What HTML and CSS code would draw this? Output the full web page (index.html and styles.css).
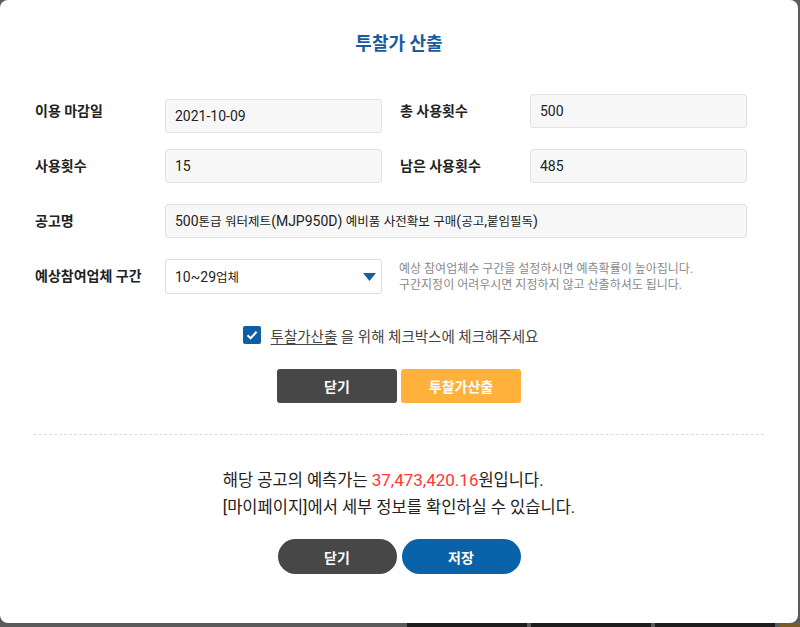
FILE: index.html
```html
<!DOCTYPE html>
<html lang="ko">
<head>
<meta charset="UTF-8">
<meta name="viewport" content="width=device-width, initial-scale=1.0">
<title>투찰가 산출</title>
<link rel="stylesheet" href="styles.css">
</head>
<body>

<!-- 뒤쪽 페이지 -->
<div class="page">
  <div class="page-body"></div>
  <div class="page-footer">
    <div class="tile"></div>
    <div class="tile"></div>
    <div class="tile"></div>
    <div class="tile tile-brown"></div>
  </div>
</div>

<!-- 투찰가 산출 팝업 -->
<div class="modal">
  <h2 class="modal-title">투찰가 산출</h2>

  <div class="form">
    <div class="form-row form-row-top">
      <div class="field">
        <label class="field-label">이용 마감일</label>
        <div class="field-input field-input-low">2021-10-09</div>
      </div>
      <div class="field">
        <label class="field-label">총 사용횟수</label>
        <div class="field-input">500</div>
      </div>
    </div>

    <div class="form-row">
      <div class="field">
        <label class="field-label">사용횟수</label>
        <div class="field-input">15</div>
      </div>
      <div class="field">
        <label class="field-label">남은 사용횟수</label>
        <div class="field-input">485</div>
      </div>
    </div>

    <div class="form-row">
      <div class="field">
        <label class="field-label">공고명</label>
        <div class="field-input field-input-wide">500<span class="ko">톤급</span> <span class="ko">워터제트</span>(MJP950D) <span class="ko">예비품</span> <span class="ko">사전확보</span> <span class="ko">구매</span>(<span class="ko">공고</span>,<span class="ko">붙임필독</span>)</div>
      </div>
    </div>

    <div class="form-row form-row-select">
      <div class="field">
        <label class="field-label">예상참여업체 구간</label>
        <div class="select-box">
          <span>10~29<span class="ko">업체</span></span>
          <svg width="13" height="8" viewBox="0 0 13 8"><polygon points="0,0 13,0 6.5,8" fill="#1b5e9c"/></svg>
        </div>
      </div>
      <p class="help-text">예상 참여업체수 구간을 설정하시면 예측확률이 높아집니다.<br>구간지정이 어려우시면 지정하지 않고 산출하셔도 됩니다.</p>
    </div>
  </div>

  <div class="agree">
    <span class="check-box">
      <svg width="18" height="18" viewBox="0 0 18 18"><polyline points="4.5,9.2 7.6,12.2 13.6,5.8" fill="none" stroke="#fff" stroke-width="2"/></svg>
    </span>
    <span class="agree-text"><u>투찰가산출</u> 을 위해 체크박스에 체크해주세요</span>
  </div>

  <div class="buttons">
    <button class="btn btn-dark">닫기</button>
    <button class="btn btn-orange">투찰가산출</button>
  </div>

  <div class="divider"></div>

  <div class="result">
    <div class="result-text">
      <p>해당 공고의 예측가는 <span class="price">37,473,420.16</span>원입니다.</p>
      <p>[마이페이지]에서 세부 정보를 확인하실 수 있습니다.</p>
    </div>
  </div>

  <div class="buttons buttons-round">
    <button class="btn btn-pill btn-dark">닫기</button>
    <button class="btn btn-pill btn-blue">저장</button>
  </div>
</div>

</body>
</html>
```

FILE: styles.css
```css
body {
  margin: 0;
  font-family: 'Roboto', 'Noto Sans CJK KR', sans-serif;
  background-color: #5a5a5a;
  color: #222;
}
.page {
  height: 627px;
  display: flex;
  flex-direction: column;
}
.page-body {
  height: 623px;
}
.page-footer {
  display: flex;
  gap: 4px;
  height: 4px;
  padding-left: 407px;
}
.tile {
  width: 120px;
  background-color: #1d1d1d;
}
.tile-brown {
  width: 20px;
  margin-left: 1px;
  background-color: #7a5a27;
}
.modal {
  position: absolute;
  top: 0;
  left: 0;
  width: 798px;
  height: 623px;
  box-sizing: border-box;
  padding: 32px 34px 0;
  background-color: #fff;
  border-radius: 8px;
}
.modal-title {
  margin: 0;
  text-align: center;
  font-size: 18px;
  line-height: 24px;
  font-weight: 700;
  color: #1a5b9f;
}
.form {
  margin-top: 38px;
}
.form-row {
  display: flex;
  align-items: flex-start;
  gap: 17px;
  margin-bottom: 21px;
}
.form-row-top {
  margin-bottom: 16px;
}
.form-row-select {
  align-items: center;
  margin-bottom: 0;
}
.field {
  display: flex;
  align-items: flex-start;
}
.field-label {
  width: 131px;
  padding-left: 1px;
  box-sizing: border-box;
  font-size: 14px;
  line-height: 34px;
  font-weight: 700;
  color: #222;
}
.field-input {
  width: 217px;
  height: 34px;
  box-sizing: border-box;
  white-space: nowrap;
  padding: 0 9px;
  border: 1px solid #e3e3e3;
  border-radius: 3px;
  background-color: #f7f7f7;
  font-size: 14px;
  line-height: 32px;
  color: #222;
}
.ko {
  font-size: 12.5px;
}
.field-input-low {
  margin-top: 5px;
}
.field-input-wide {
  width: 582px;
}
.form-row-select .field-label {
  line-height: 35px;
}
.select-box {
  width: 217px;
  height: 35px;
  box-sizing: border-box;
  display: flex;
  align-items: center;
  justify-content: space-between;
  padding: 0 5px 0 9px;
  border: 1px solid #dedede;
  border-radius: 3px;
  background-color: #fff;
  font-size: 14px;
}
.help-text {
  margin: 0;
  font-size: 12px;
  line-height: 16px;
  color: #8a8a8a;
}
.agree {
  display: flex;
  align-items: center;
  justify-content: center;
  gap: 10px;
  margin-top: 32px;
  padding-right: 17px;
  height: 18px;
}
.check-box {
  display: flex;
  width: 18px;
  height: 18px;
  border-radius: 2px;
  background-color: #0e5ea6;
}
.agree-text {
  font-size: 14.5px;
  color: #444;
}
.agree-text u {
  text-underline-offset: 2px;
}
.buttons {
  display: flex;
  justify-content: center;
  gap: 4px;
  margin-top: 25px;
}
.btn {
  width: 120px;
  height: 34px;
  border: none;
  border-radius: 3px;
  padding: 0;
  font-family: inherit;
  font-size: 14px;
  font-weight: 700;
  color: #fff;
  cursor: pointer;
}
.btn-dark {
  background-color: #474747;
}
.btn-orange {
  background-color: #ffb13c;
}
.btn-blue {
  background-color: #0a63a8;
}
.divider {
  margin-top: 31px;
  border-top: 1px dashed #dcdcdc;
}
.result {
  display: flex;
  justify-content: center;
  margin-top: 32px;
  font-size: 16.5px;
  line-height: 27px;
  color: #222;
}
.result p {
  margin: 0;
}
.price {
  font-size: 17px;
  color: #ff3535;
}
.buttons-round {
  gap: 5px;
  margin-top: 18px;
}
.btn-pill {
  width: 119px;
  height: 35px;
  border-radius: 18px;
}
```
